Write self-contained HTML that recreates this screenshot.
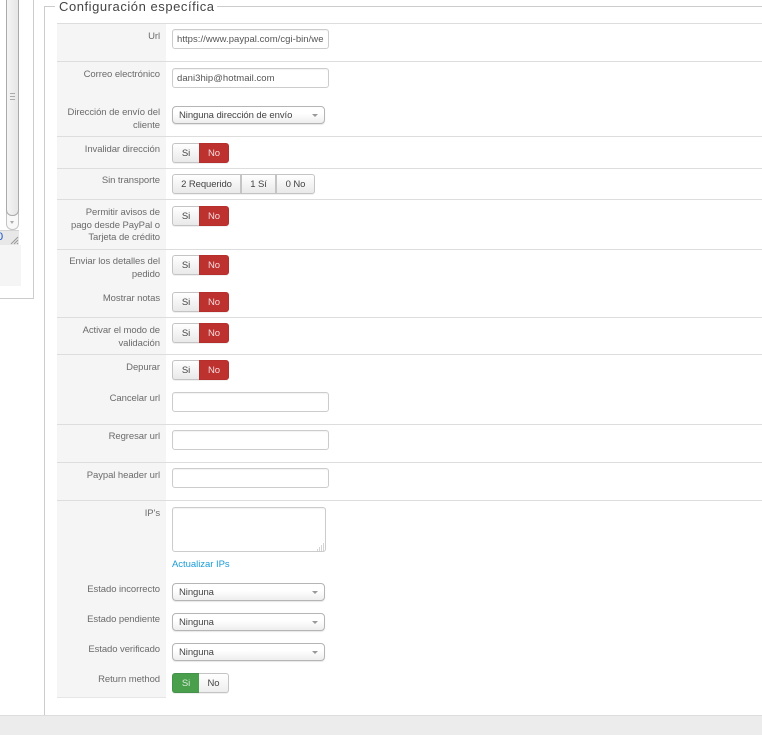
<!DOCTYPE html>
<html><head><meta charset="utf-8"><style>
html,body{margin:0;padding:0;background:#fff}
body{width:762px;height:735px;overflow:hidden;position:relative;font-family:"Liberation Sans",sans-serif;font-size:9.5px;color:#555}
div,span,a{position:absolute;box-sizing:border-box}
.ln{left:57px;width:705px;height:1px;background:#ddd}
.lb{left:57px;width:103px;text-align:right;color:#6b6b6b;line-height:12.5px;letter-spacing:-.07px;margin-top:1px}
.in{left:172px;width:157px;height:20px;background:#fff;border:1px solid #ccc;border-radius:3px;line-height:20px;padding-left:4px;color:#555;letter-spacing:.04px;box-shadow:inset 0 1px 1px rgba(0,0,0,.05)}
.sel{left:172px;width:153px;height:18px;border:1px solid #b5b5b5;border-radius:4px;background:linear-gradient(#fff,#fff 40%,#eee);line-height:18px;padding-left:6px;color:#444;letter-spacing:-.07px;box-shadow:0 1px 1px rgba(0,0,0,.1)}
.sel:after{content:"";position:absolute;right:6px;top:7px;border:3px solid transparent;border-top:3px solid #999;border-bottom:0}
.b{height:20px;top:0;text-align:center;line-height:20px;border:1px solid #c4c4c4;background:linear-gradient(#fff,#e9e9e9);color:#444;letter-spacing:-.1px;box-shadow:0 1px 0 rgba(0,0,0,.06)}
.t{left:172px;width:57px;height:20px}
.t .s{left:0;width:27px;border-radius:3px 0 0 3px;border-right:0}
.t .n{left:27px;width:30px;border:1px solid #b5302c;background:#bd322e;color:#f3dbe0;border-radius:0 3px 3px 0}
.g .s{background:#4a9f4d;border-color:#43914a;color:#d8ecd8;width:27px}
.g .n{background:linear-gradient(#fff,#eee);border-color:#c4c4c4;color:#444;border-left:0}
</style></head><body>

<!-- left panel -->
<div style="left:0;top:0;width:21px;height:286px;background:#f5f5f5"></div>
<div style="left:33px;top:0;width:1px;height:299px;background:#ccc"></div>
<div style="left:0;top:298px;width:34px;height:1px;background:#ccc"></div>
<div style="left:0;top:0;width:19px;height:230px;background:#fff"></div>
<div style="left:6px;top:-4px;width:13px;height:234px;background:#f8f8f8;border:1px solid #c4c4c4;border-top:0;border-radius:0 0 6px 6px"></div>
<div style="left:6px;top:-4px;width:13px;height:220px;background:linear-gradient(90deg,#f4f4f4,#e6e6e6);border:1px solid #aaa;border-top:0;border-radius:0 0 6px 6px"></div>
<div style="left:10px;top:221px;width:0;height:0;border:2.5px solid transparent;border-top:3px solid #aaa;border-bottom:0"></div>
<div style="left:10px;top:93px;width:5px;height:1px;background:#aaa;box-shadow:0 3px 0 #aaa,0 6px 0 #aaa"></div>
<div style="left:0;top:230px;width:19px;height:15px;background:#e8e8e8;border-top:1px solid #d4d4d4"></div>
<span style="left:-3px;top:231px;color:#1450c8;font-size:11px;line-height:13px">0</span>
<svg style="position:absolute;left:10px;top:236px" width="9" height="9"><path d="M1 8L8 1M4 8L8 4M7 8L8 7" stroke="#999" stroke-width="1" fill="none"/></svg>
<div style="left:19px;top:0;width:2px;height:245px;background:#fff"></div>

<!-- fieldset -->
<div style="left:44px;top:6px;width:1px;height:709px;background:#ccc"></div>
<div style="left:44px;top:6px;width:718px;height:1px;background:#ccc"></div>
<div style="left:55px;top:-1px;height:16px;background:#fff;padding:0 2px 0 4px;font-size:13px;line-height:15px;color:#444;letter-spacing:.55px;white-space:nowrap;position:absolute">Configuración específica</div>

<!-- label column -->
<div style="left:57px;top:23px;width:109px;height:675px;background:#f5f5f5"></div>

<!-- row lines -->
<div class="ln" style="top:23px"></div>
<div class="ln" style="top:61px"></div>
<div class="ln" style="top:136px"></div>
<div class="ln" style="top:168px"></div>
<div class="ln" style="top:199px"></div>
<div class="ln" style="top:249px"></div>
<div class="ln" style="top:317px"></div>
<div class="ln" style="top:354px"></div>
<div class="ln" style="top:424px"></div>
<div class="ln" style="top:462px"></div>
<div class="ln" style="top:500px"></div>
<div style="left:57px;top:697px;width:109px;height:1px;background:#e6e6e6"></div>

<!-- labels -->
<div class="lb" style="top:30px">Url</div>
<div class="lb" style="top:68px">Correo electrónico</div>
<div class="lb" style="top:106px">Dirección de envío del<br>cliente</div>
<div class="lb" style="top:143px">Invalidar dirección</div>
<div class="lb" style="top:174px">Sin transporte</div>
<div class="lb" style="top:206px">Permitir avisos de<br>pago desde PayPal o<br>Tarjeta de crédito</div>
<div class="lb" style="top:255px">Enviar los detalles del<br>pedido</div>
<div class="lb" style="top:292px">Mostrar notas</div>
<div class="lb" style="top:324px">Activar el modo de<br>validación</div>
<div class="lb" style="top:361px">Depurar</div>
<div class="lb" style="top:392px">Cancelar url</div>
<div class="lb" style="top:430px">Regresar url</div>
<div class="lb" style="top:469px">Paypal header url</div>
<div class="lb" style="top:507px">IP's</div>
<div class="lb" style="top:583px">Estado incorrecto</div>
<div class="lb" style="top:613px">Estado pendiente</div>
<div class="lb" style="top:643px">Estado verificado</div>
<div class="lb" style="top:673px">Return method</div>

<!-- controls -->
<div class="in" style="top:29px">https://www.paypal.com/cgi-bin/we</div>
<div class="in" style="top:68px">dani3hip@hotmail.com</div>
<div class="sel" style="top:106px">Ninguna dirección de envío</div>

<div class="t" style="top:143px"><div class="b s">Si</div><div class="b n">No</div></div>

<div style="left:172px;top:174px;width:143px;height:20px">
<div class="b" style="left:0;width:69px;border-radius:3px 0 0 3px">2 Requerido</div>
<div class="b" style="left:69px;width:35px">1 Sí</div>
<div class="b" style="left:104px;width:39px;border-radius:0 3px 3px 0">0 No</div>
</div>

<div class="t" style="top:206px"><div class="b s">Si</div><div class="b n">No</div></div>
<div class="t" style="top:255px"><div class="b s">Si</div><div class="b n">No</div></div>
<div class="t" style="top:292px"><div class="b s">Si</div><div class="b n">No</div></div>
<div class="t" style="top:323px"><div class="b s">Si</div><div class="b n">No</div></div>
<div class="t" style="top:360px"><div class="b s">Si</div><div class="b n">No</div></div>

<div class="in" style="top:392px"></div>
<div class="in" style="top:430px"></div>
<div class="in" style="top:468px"></div>

<div class="in" style="top:507px;width:154px;height:45px"></div>
<svg style="position:absolute;left:316px;top:543px" width="9" height="8"><path d="M7 1h1M5 3h1M7 3h1M3 5h1M5 5h1M7 5h1M1 7h1M3 7h1M5 7h1M7 7h1" stroke="#aaa" stroke-width="1" fill="none"/></svg>
<a style="left:172px;top:559px;color:#1a9bd7;line-height:12px;letter-spacing:-.03px">Actualizar IPs</a>

<div class="sel" style="top:583px">Ninguna</div>
<div class="sel" style="top:613px">Ninguna</div>
<div class="sel" style="top:643px">Ninguna</div>

<div class="t g" style="top:673px"><div class="b s">Si</div><div class="b n">No</div></div>

<!-- footer -->
<div style="left:0;top:715px;width:762px;height:20px;background:#ececec;border-top:1px solid #ddd"></div>
</body></html>
